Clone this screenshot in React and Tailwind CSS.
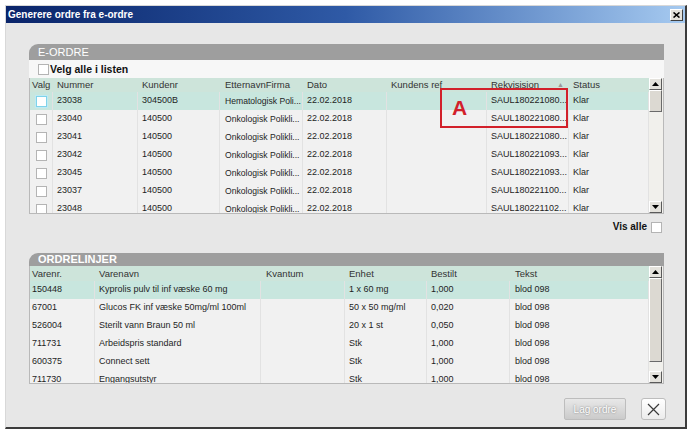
import React from 'react'

const eordreCols = [
  { key: 'valg', label: 'Valg', w: 'w-[23px]', pad: 'pl-[2px]' },
  { key: 'nr', label: 'Nummer', w: 'w-[85px]', pad: 'pl-[4px]' },
  { key: 'kunde', label: 'Kundenr', w: 'w-[82px]', pad: 'pl-[4px]' },
  { key: 'navn', label: 'EtternavnFirma', w: 'w-[83px]', pad: 'pl-[5px]' },
  { key: 'dato', label: 'Dato', w: 'w-[84px]', pad: 'pl-[4px]' },
  { key: 'ref', label: 'Kundens ref', w: 'w-[100px]', pad: 'pl-[4px]' },
  { key: 'rekv', label: 'Rekvisision', w: 'w-[82px]', pad: 'pl-[4px]' },
  { key: 'status', label: 'Status', w: 'w-[80px]', pad: 'pl-[4px]' },
]

const eordreRows = [
  { nr: '23038', kunde: '304500B', navn: 'Hematologisk Poli...', rekv: 'SAUL180221080...' },
  { nr: '23040', kunde: '140500', navn: 'Onkologisk Polikli...', rekv: 'SAUL180221080...' },
  { nr: '23041', kunde: '140500', navn: 'Onkologisk Polikli...', rekv: 'SAUL180221080...' },
  { nr: '23042', kunde: '140500', navn: 'Onkologisk Polikli...', rekv: 'SAUL180221093...' },
  { nr: '23045', kunde: '140500', navn: 'Onkologisk Polikli...', rekv: 'SAUL180221093...' },
  { nr: '23037', kunde: '140500', navn: 'Onkologisk Polikli...', rekv: 'SAUL180221100...' },
  { nr: '23048', kunde: '140500', navn: 'Onkologisk Polikli...', rekv: 'SAUL180221102...' },
]

const linjeCols = [
  { key: 'nr', label: 'Varenr.', w: 'w-[65px]', pad: 'pl-[2px]' },
  { key: 'navn', label: 'Varenavn', w: 'w-[166px]', pad: 'pl-[4px]' },
  { key: 'kv', label: 'Kvantum', w: 'w-[84px]', pad: 'pl-[5px]' },
  { key: 'enhet', label: 'Enhet', w: 'w-[82px]', pad: 'pl-[4px]' },
  { key: 'best', label: 'Bestilt', w: 'w-[83px]', pad: 'pl-[4px]' },
  { key: 'tekst', label: 'Tekst', w: 'w-[139px]', pad: 'pl-[5px]' },
]

const linjeRows = [
  { nr: '150448', navn: 'Kyprolis pulv til inf væske 60 mg', enhet: '1 x 60 mg', best: '1,000' },
  { nr: '67001', navn: 'Glucos FK inf væske 50mg/ml 100ml', enhet: '50 x 50 mg/ml', best: '0,020' },
  { nr: '526004', navn: 'Sterilt vann Braun 50 ml', enhet: '20 x 1 st', best: '0,050' },
  { nr: '711731', navn: 'Arbeidspris standard', enhet: 'Stk', best: '1,000' },
  { nr: '600375', navn: 'Connect sett', enhet: 'Stk', best: '1,000' },
  { nr: '711730', navn: 'Engangsutstyr', enhet: 'Stk', best: '1,000' },
]

function Box({ focus }) {
  return (
    <div
      className={`w-[11px] h-[11px] bg-white border ${focus ? 'border-[#7fd3ea] shadow-[0_0_0_1px_#bfeaf4]' : 'border-[#b4b4b4]'}`}
    />
  )
}

function Arrow({ up }) {
  return (
    <div className="w-[13px] h-[12px] bg-[#e4e2dc] border border-t-white border-l-white border-r-[#5a5a5a] border-b-[#5a5a5a] flex items-center justify-center">
      <svg width="7" height="4" viewBox="0 0 7 4">
        {up ? <path d="M0 4 L3.5 0 L7 4 Z" fill="#000" /> : <path d="M0 0 L3.5 4 L7 0 Z" fill="#000" />}
      </svg>
    </div>
  )
}

function Scrollbar({ thumb }) {
  return (
    <div className="w-[14px] h-full bg-[#f1f0ec] flex flex-col">
      <Arrow up />
      <div className={`${thumb} w-[13px] bg-[#dcd9d2] border border-t-white border-l-white border-r-[#6a6a6a] border-b-[#6a6a6a]`} />
      <div className="flex-1" />
      <Arrow />
    </div>
  )
}

function PanelHeader({ title, h, bold }) {
  return (
    <div className={`${h} bg-[#9e9e9e] rounded-tl-[9px] flex items-center pl-[9px] text-white text-[11px] leading-none ${bold ? 'font-bold' : ''}`}>
      {title}
    </div>
  )
}

export default function App() {
  return (
    <div className="w-[692px] h-[433px] bg-white pt-[5px] pl-[5px] overflow-hidden" style={{ fontFamily: '"Liberation Sans", Arial, sans-serif' }}>
      <div className="w-[682px] h-[424px] bg-[#e7e7e7] border-l border-t border-l-[#d8d8d8] border-t-[#d8d8d8] border-r-2 border-b-2 border-r-[#3c3c3c] border-b-[#3c3c3c] flex flex-col">
        {/* Title bar */}
        <div className="h-[17px] bg-gradient-to-r from-[#0a246a] via-[#2f5aa6] to-[#a6caf0] flex items-center justify-between pl-[2px] pr-[2px]">
          <span className="text-white font-bold text-[10px] leading-none">Generere ordre fra e-ordre</span>
          <div className="w-[13px] h-[12px] bg-[#e4e2dc] border border-t-white border-l-white border-r-[#404040] border-b-[#404040] flex items-center justify-center">
            <svg width="7" height="6" viewBox="0 0 7 6">
              <path d="M0.5 0.5 L6.5 5.5 M6.5 0.5 L0.5 5.5" stroke="#000" strokeWidth="1.6" />
            </svg>
          </div>
        </div>

        <div className="flex-1 pl-[23px] pt-[21px]">
          {/* E-ORDRE */}
          <div className="w-[635px]">
            <PanelHeader title="E-ORDRE" h="h-[16px]" />
            <div className="h-[18px] bg-[#f7f7f7] flex items-center gap-[1px] pl-[9px]">
              <Box />
              <span className="font-bold text-[10.5px] text-[#111] leading-none">Velg alle i listen</span>
            </div>
            <div className="relative h-[136px] flex border-l border-b border-r border-[#b9b9b9] overflow-hidden">
              <div className="w-[619px] flex flex-col bg-[#f1f1f1]">
                <div className="h-[14px] bg-[#cde4da] flex shrink-0">
                  {eordreCols.map(c => (
                    <div key={c.key} className={`${c.w} ${c.pad} shrink-0 text-[9.5px] text-[#333] leading-[14px] flex items-center`}>
                      {c.label}
                      {c.key === 'rekv' && <span className="ml-auto mr-[5px] text-[7px] text-[#9a9a9a]">▲</span>}
                    </div>
                  ))}
                </div>
                {eordreRows.map((r, i) => (
                  <div key={r.nr} className={`h-[18px] shrink-0 flex ${i === 0 ? 'bg-[#c8e6de]' : ''}`}>
                    {eordreCols.map(c => {
                      const val = { nr: r.nr, kunde: r.kunde, navn: r.navn, dato: '22.02.2018', ref: '', rekv: r.rekv, status: 'Klar' }[c.key]
                      return (
                        <div key={c.key} className={`${c.w} ${c.pad} shrink-0 border-r border-[#e2e2e2] flex items-center text-[#1e1e1e] whitespace-nowrap overflow-hidden ${c.key === 'navn' ? 'text-[8.6px]' : 'text-[9px]'} ${c.key === 'valg' ? 'pl-[6px]' : ''}`}>
                          {c.key === 'valg' ? <Box focus={i === 0} /> : val}
                        </div>
                      )
                    })}
                  </div>
                ))}
              </div>
              <Scrollbar thumb="h-[22px]" />
              {/* annotation */}
              <div className="absolute left-[410px] top-[10px] w-[128px] h-[40px] border-2 border-[#d2202a] pointer-events-none">
                <span className="absolute left-[10px] top-[7px] text-[#d2202a] font-bold text-[21px] leading-none">A</span>
              </div>
            </div>
            <div className="mt-[7px] h-[12px] flex items-center justify-end gap-[4px] pr-[2px]">
              <span className="font-bold text-[10px] text-[#111] leading-none">Vis alle</span>
              <Box />
            </div>
          </div>

          {/* ORDRELINJER */}
          <div className="w-[635px] mt-[20px]">
            <PanelHeader title="ORDRELINJER" h="h-[13px]" bold />
            <div className="h-[118px] flex border-l border-b border-r border-[#b9b9b9] overflow-hidden">
              <div className="w-[619px] flex flex-col bg-[#f1f1f1]">
                <div className="h-[15px] bg-[#cde4da] flex shrink-0">
                  {linjeCols.map(c => (
                    <div key={c.key} className={`${c.w} ${c.pad} shrink-0 text-[9.5px] text-[#333] leading-[15px]`}>
                      {c.label}
                    </div>
                  ))}
                </div>
                {linjeRows.map((r, i) => (
                  <div key={r.nr} className={`h-[18px] shrink-0 flex ${i === 0 ? 'bg-[#c8e6de]' : ''}`}>
                    {linjeCols.map(c => {
                      const val = { nr: r.nr, navn: r.navn, kv: '', enhet: r.enhet, best: r.best, tekst: 'blod 098' }[c.key]
                      return (
                        <div key={c.key} className={`${c.w} ${c.pad} shrink-0 border-r border-[#e2e2e2] flex items-center text-[9px] text-[#1e1e1e] whitespace-nowrap overflow-hidden`}>
                          {val}
                        </div>
                      )
                    })}
                  </div>
                ))}
              </div>
              <Scrollbar thumb="h-[84px]" />
            </div>
          </div>

          {/* Buttons */}
          <div className="w-[637px] mt-[14px] flex justify-end gap-[15px]">
            <div className="w-[62px] h-[22px] rounded-[2px] border border-[#bdbdbd] bg-gradient-to-b from-[#e8e8e8] to-[#cbcbcb] flex items-center justify-center text-[10px] text-white [text-shadow:0_0_2px_#6e6e6e]">
              Lag ordre
            </div>
            <div className="w-[25px] h-[22px] rounded-[3px] border border-[#bdbdbd] bg-gradient-to-b from-white to-[#ececec] flex items-center justify-center">
              <svg width="13" height="13" viewBox="0 0 13 13">
                <path d="M1 1 L12 12 M12 1 L1 12" stroke="#3a3a3a" strokeWidth="1.2" />
              </svg>
            </div>
          </div>
        </div>
      </div>
    </div>
  )
}
